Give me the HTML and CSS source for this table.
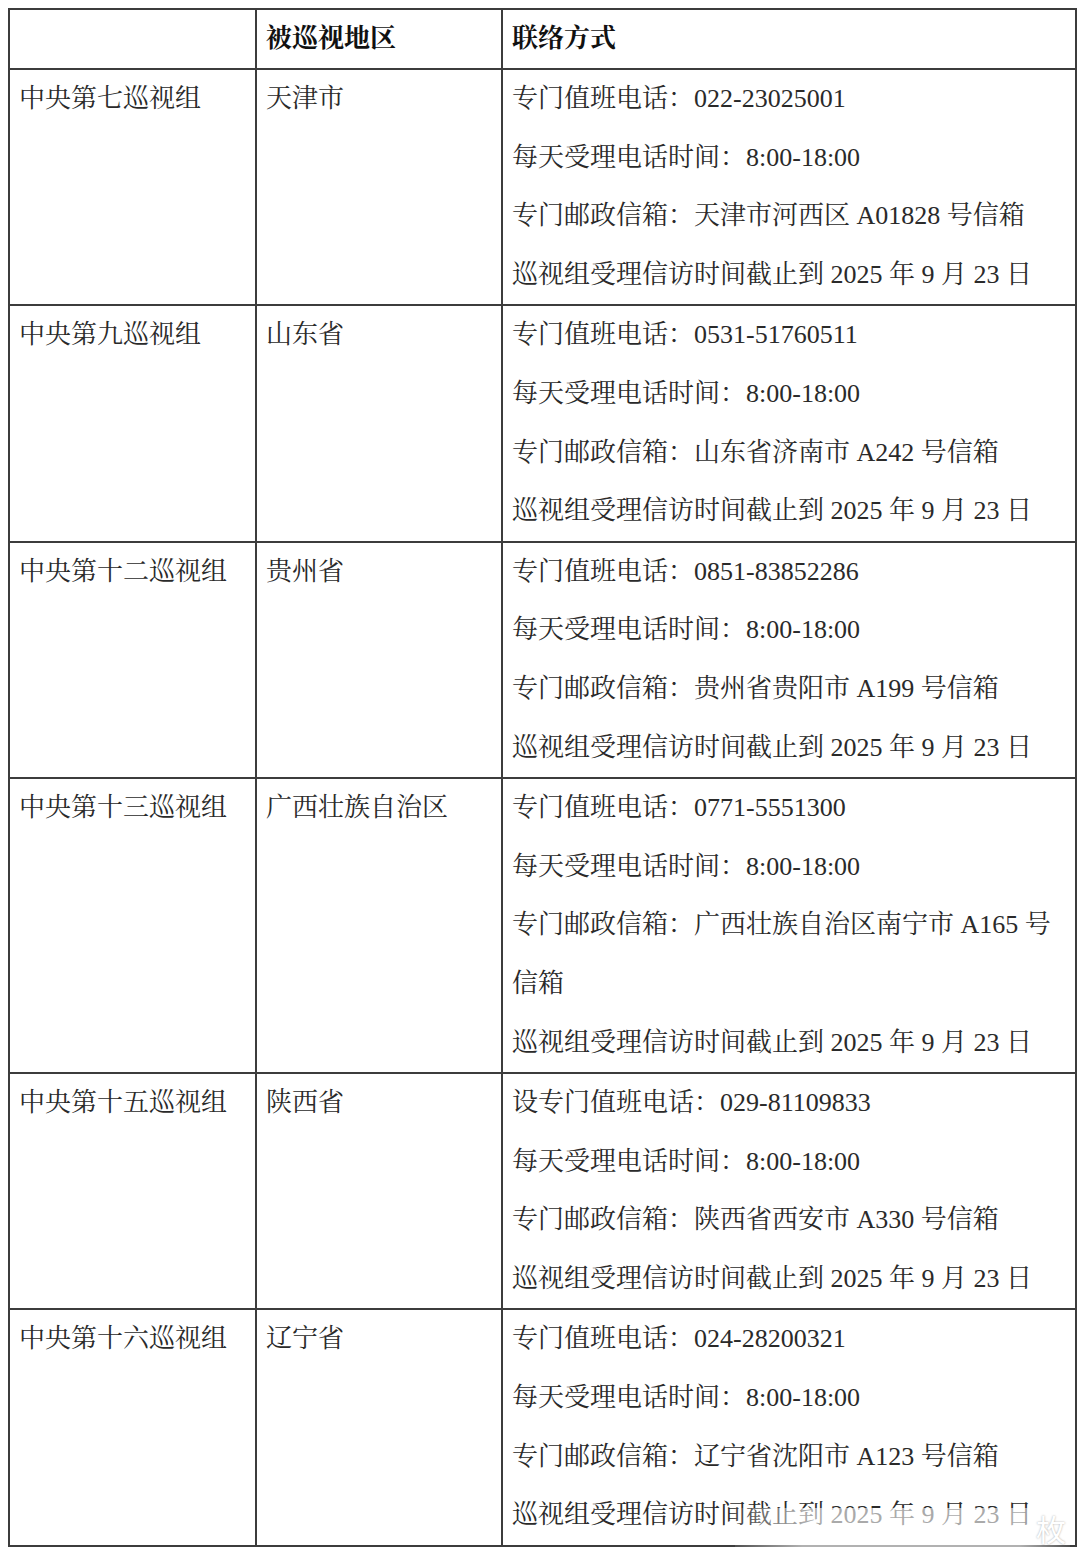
FILE: index.html
```html
<!DOCTYPE html>
<html lang="zh-CN">
<head>
<meta charset="utf-8">
<title>巡视组联络方式</title>
<link rel="stylesheet" href="styles.css">
</head>
<body>
<div class="page">
<table class="tbl">
  <colgroup><col class="c1"><col class="c2"><col class="c3"></colgroup>
  <thead>
    <tr><th></th><th>被巡视地区</th><th>联络方式</th></tr>
  </thead>
  <tbody>
    <tr>
      <td>中央第七巡视组</td>
      <td>天津市</td>
      <td>
        <div class="ln">专门值班电话：022-23025001</div>
        <div class="ln">每天受理电话时间：8:00-18:00</div>
        <div class="ln">专门邮政信箱：天津市河西区 A01828 号信箱</div>
        <div class="ln">巡视组受理信访时间截止到 2025 年 9 月 23 日</div>
      </td>
    </tr>
    <tr>
      <td>中央第九巡视组</td>
      <td>山东省</td>
      <td>
        <div class="ln">专门值班电话：0531-51760511</div>
        <div class="ln">每天受理电话时间：8:00-18:00</div>
        <div class="ln">专门邮政信箱：山东省济南市 A242 号信箱</div>
        <div class="ln">巡视组受理信访时间截止到 2025 年 9 月 23 日</div>
      </td>
    </tr>
    <tr>
      <td>中央第十二巡视组</td>
      <td>贵州省</td>
      <td>
        <div class="ln">专门值班电话：0851-83852286</div>
        <div class="ln">每天受理电话时间：8:00-18:00</div>
        <div class="ln">专门邮政信箱：贵州省贵阳市 A199 号信箱</div>
        <div class="ln">巡视组受理信访时间截止到 2025 年 9 月 23 日</div>
      </td>
    </tr>
    <tr>
      <td>中央第十三巡视组</td>
      <td>广西壮族自治区</td>
      <td>
        <div class="ln">专门值班电话：0771-5551300</div>
        <div class="ln">每天受理电话时间：8:00-18:00</div>
        <div class="ln">专门邮政信箱：广西壮族自治区南宁市 A165 号</div>
        <div class="ln">信箱</div>
        <div class="ln">巡视组受理信访时间截止到 2025 年 9 月 23 日</div>
      </td>
    </tr>
    <tr>
      <td>中央第十五巡视组</td>
      <td>陕西省</td>
      <td>
        <div class="ln">设专门值班电话：029-81109833</div>
        <div class="ln">每天受理电话时间：8:00-18:00</div>
        <div class="ln">专门邮政信箱：陕西省西安市 A330 号信箱</div>
        <div class="ln">巡视组受理信访时间截止到 2025 年 9 月 23 日</div>
      </td>
    </tr>
    <tr>
      <td>中央第十六巡视组</td>
      <td>辽宁省</td>
      <td>
        <div class="ln">专门值班电话：024-28200321</div>
        <div class="ln">每天受理电话时间：8:00-18:00</div>
        <div class="ln">专门邮政信箱：辽宁省沈阳市 A123 号信箱</div>
        <div class="ln">巡视组受理信访时间截止到 2025 年 9 月 23 日</div>
      </td>
    </tr>
  </tbody>
</table>
<div class="wm"><span class="wm-txt">枚</span></div>
</div>
</body>
</html>
```
FILE: styles.css
```css
html, body {
  margin: 0;
  padding: 0;
  background: #ffffff;
}
.page {
  position: relative;
  width: 1080px;
  height: 1565px;
  padding: 8px 0 0 8px;
  box-sizing: border-box;
}
.tbl {
  border-collapse: collapse;
  table-layout: fixed;
  width: 1067px;
  font-family: "Liberation Serif", "Noto Serif CJK SC", "Noto Sans CJK SC", serif;
  font-size: 26px;
  color: #2a2a2a;
}
.c1 { width: 247px; }
.c2 { width: 246px; }
.c3 { width: 574px; }
.tbl th, .tbl td {
  border: 2px solid #3c3c3c;
  padding: 0 10px 0 9px;
  line-height: 58.6px;
  vertical-align: top;
  text-align: left;
  white-space: nowrap;
}
.tbl th {
  font-weight: bold;
  color: #111111;
  line-height: 58px;
  height: 58px;
}
.ln {
  height: 58.6px;
  line-height: 58.6px;
}
.wm {
  position: absolute;
  left: 735px;
  top: 1508px;
  width: 335px;
  height: 40px;
  display: flex;
  align-items: center;
  justify-content: flex-end;
  background: linear-gradient(to right, rgba(255,255,255,0.1), rgba(255,255,255,0.6) 20%, rgba(255,255,255,0.6) 85%, rgba(255,255,255,0.1));
  font-family: "Noto Sans CJK SC", sans-serif;
  color: #ffffff;
  text-shadow: 0 0 2px rgba(0,0,0,0.35);
}
.wm-txt {
  font-size: 30px;
  padding-right: 4px;
}
```
